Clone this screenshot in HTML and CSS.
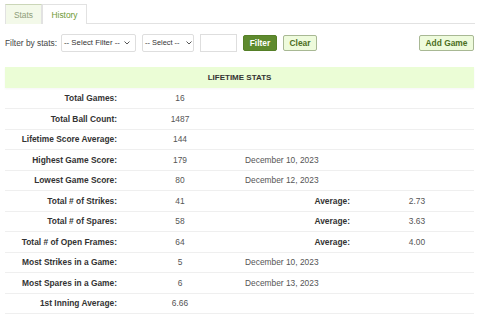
FILE: index.html
```html
<!DOCTYPE html>
<html>
<head>
<meta charset="utf-8">
<link rel="stylesheet" href="styles.css">
</head>
<body>
<div class="page">
  <div class="tabs">
    <div class="tab active">Stats</div>
    <div class="tab">History</div>
  </div>
  <div class="filters">
    <span class="filter-label">Filter by stats:</span>
    <div class="select sel1"><span class="sel-text">-- Select Filter --</span><svg class="chev" width="6" height="4" viewBox="0 0 6 4"><path d="M0.5 0.5 L3 3 L5.5 0.5" fill="none" stroke="#555" stroke-width="1"/></svg></div>
    <div class="select sel2"><span class="sel-text">-- Select --</span><svg class="chev" width="6" height="4" viewBox="0 0 6 4"><path d="M0.5 0.5 L3 3 L5.5 0.5" fill="none" stroke="#555" stroke-width="1"/></svg></div>
    <div class="input"></div>
    <button class="btn btn-dark">Filter</button>
    <button class="btn btn-light">Clear</button>
    <button class="btn btn-light add">Add Game</button>
  </div>
  <table class="stats">
    <colgroup>
      <col class="c1"><col class="c2"><col class="c3"><col class="c4">
    </colgroup>
    <thead>
      <tr><th colspan="4">LIFETIME STATS</th></tr>
    </thead>
    <tbody>
      <tr><td class="lbl">Total Games:</td><td class="val">16</td><td class="date"></td><td class="val"></td></tr>
      <tr><td class="lbl">Total Ball Count:</td><td class="val">1487</td><td class="date"></td><td class="val"></td></tr>
      <tr><td class="lbl">Lifetime Score Average:</td><td class="val">144</td><td class="date"></td><td class="val"></td></tr>
      <tr><td class="lbl">Highest Game Score:</td><td class="val">179</td><td class="date">December 10, 2023</td><td class="val"></td></tr>
      <tr><td class="lbl">Lowest Game Score:</td><td class="val">80</td><td class="date">December 12, 2023</td><td class="val"></td></tr>
      <tr><td class="lbl">Total # of Strikes:</td><td class="val">41</td><td class="lbl2">Average:</td><td class="val">2.73</td></tr>
      <tr><td class="lbl">Total # of Spares:</td><td class="val">58</td><td class="lbl2">Average:</td><td class="val">3.63</td></tr>
      <tr><td class="lbl">Total # of Open Frames:</td><td class="val">64</td><td class="lbl2">Average:</td><td class="val">4.00</td></tr>
      <tr><td class="lbl">Most Strikes in a Game:</td><td class="val">5</td><td class="date">December 10, 2023</td><td class="val"></td></tr>
      <tr><td class="lbl">Most Spares in a Game:</td><td class="val">6</td><td class="date">December 13, 2023</td><td class="val"></td></tr>
      <tr><td class="lbl">1st Inning Average:</td><td class="val">6.66</td><td class="date"></td><td class="val"></td></tr>
    </tbody>
  </table>
</div>
</body>
</html>
```
FILE: styles.css
```css
* { box-sizing: border-box; }
body {
  margin: 0;
  background: #fff;
  font-family: "Liberation Sans", Arial, sans-serif;
  font-size: 8.4px;
  color: #333;
}
.page {
  padding: 4px 5px 0 5px;
}
.tabs {
  display: flex;
  height: 20px;
  border-bottom: 1px solid #e2e2e2;
}
.tab {
  display: flex;
  align-items: center;
  justify-content: center;
  height: 20px;
  border: 1px solid #e2e2e2;
  border-bottom: none;
  background: #fff;
  color: #6f9a35;
  font-size: 8.4px;
  width: 45px;
}
.tab.active {
  width: 37px;
  background: #f3f9e9;
  color: #8d9c78;
  border-top: 1px solid #cbd6b8;
  margin-bottom: -1px;
  height: 20px;
}
.filters {
  display: flex;
  align-items: center;
  margin-top: 9px;
  height: 19px;
}
.filter-label {
  color: #444;
  width: 56px;
  white-space: nowrap;
}
.select {
  display: flex;
  align-items: center;
  justify-content: space-between;
  height: 18px;
  border: 1px solid #dedede;
  border-radius: 2px;
  padding: 0 5px 0 2px;
  color: #333;
  background: #fff;
  white-space: nowrap;
  overflow: hidden;
}
.sel-text {
  font-size: 7.8px;
}
.chev { flex: none; }
.sel1 { width: 75px; }
.sel2 { width: 52px; margin-left: 6px; padding-right: 1px; }
.sel2 .sel-text { font-size: 7.4px; }
.input {
  width: 37px;
  height: 18px;
  border: 1px solid #dedede;
  margin-left: 6px;
  background: #fff;
}
.btn {
  font-family: "Liberation Sans", Arial, sans-serif;
  font-weight: bold;
  font-size: 8.4px;
  height: 16px;
  padding: 0;
  border-radius: 2px;
  cursor: pointer;
  white-space: nowrap;
}
.btn-dark {
  width: 34px;
  margin-left: 6px;
  background: #5e8a2e;
  border: 1px solid #557f27;
  color: #fff;
}
.btn-light {
  width: 34px;
  margin-left: 6px;
  background: #eefbdc;
  border: 1px solid #a8b894;
  color: #4c6e22;
}
.btn-light.add {
  width: 55px;
  margin-left: auto;
  margin-right: 1px;
}
.stats {
  margin-top: 15px;
  width: 469px;
  border-collapse: collapse;
  table-layout: fixed;
}
.c1 { width: 120px; }
.c2 { width: 110px; }
.c3 { width: 125px; }
.c4 { width: 114px; }
.stats th {
  height: 21px;
  background: #ebfdd6;
  font-weight: bold;
  font-size: 8px;
  color: #333;
  text-align: center;
  padding: 0;
  box-shadow: 0 1px 2px rgba(0,0,0,0.04);
}
.stats td {
  height: 20.5px;
  padding: 0;
  border-bottom: 1px solid #efefef;
  white-space: nowrap;
}
.stats td.lbl {
  text-align: right;
  font-weight: bold;
  color: #333;
  padding-right: 8px;
}
.stats td.val {
  text-align: center;
  color: #555;
}
.stats td.date {
  text-align: left;
  color: #555;
  padding-left: 10px;
}
.stats td.lbl2 {
  text-align: right;
  font-weight: bold;
  color: #333;
  padding-right: 10px;
}
```
